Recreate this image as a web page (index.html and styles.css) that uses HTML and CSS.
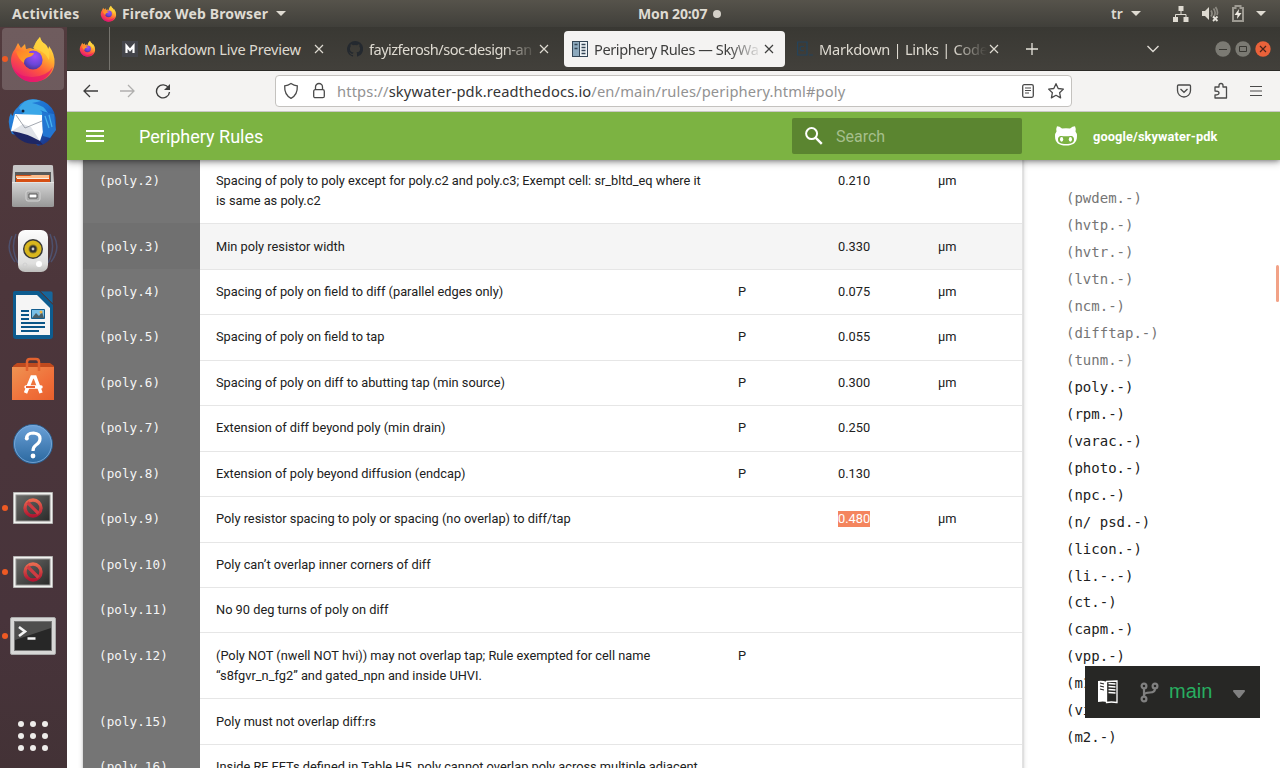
FILE: index.html
```html
<!DOCTYPE html>
<html lang="en">
<head>
<meta charset="utf-8">
<title>Periphery Rules — SkyWater</title>
<link rel="stylesheet" href="styles.css">
</head>
<body>
<svg class="defs" width="0" height="0">
  <defs>
    <linearGradient id="fx-body" x1=".85" y1="0" x2=".25" y2="1"><stop offset="0" stop-color="#fff34f"/><stop offset=".35" stop-color="#ffb02e"/><stop offset=".62" stop-color="#ff5a3c"/><stop offset="1" stop-color="#e6137a"/></linearGradient>
    <radialGradient id="fx-globe" cx=".6" cy=".3" r=".75"><stop offset="0" stop-color="#a04df8"/><stop offset=".6" stop-color="#6a46d8"/><stop offset="1" stop-color="#49328f"/></radialGradient>
    <linearGradient id="fx-face" x1="0" y1="0" x2="1" y2="1"><stop offset="0" stop-color="#ff7a2c"/><stop offset="1" stop-color="#ffae22"/></linearGradient>
    <linearGradient id="tb-blue" x1="0" y1="0" x2="1" y2="1"><stop offset="0" stop-color="#2f8fe0"/><stop offset=".5" stop-color="#1b6fd0"/><stop offset="1" stop-color="#1b2474"/></linearGradient>
    <linearGradient id="metal" x1="0" y1="0" x2="0" y2="1"><stop offset="0" stop-color="#d5d5d5"/><stop offset="1" stop-color="#979797"/></linearGradient>
    <linearGradient id="white-box" x1="0" y1="0" x2="0" y2="1"><stop offset="0" stop-color="#fdfdfd"/><stop offset=".8" stop-color="#dededd"/><stop offset="1" stop-color="#bdbdbb"/></linearGradient>
    <linearGradient id="bag" x1="0" y1="0" x2="1" y2="1"><stop offset="0" stop-color="#ee9352"/><stop offset=".6" stop-color="#f0703a"/><stop offset="1" stop-color="#e85f2c"/></linearGradient>
    <linearGradient id="help" x1="0" y1="0" x2="0" y2="1"><stop offset="0" stop-color="#6ba1d8"/><stop offset="1" stop-color="#2b689f"/></linearGradient>
    <linearGradient id="screen" x1="0" y1="0" x2="1" y2="1"><stop offset="0" stop-color="#6a6a68"/><stop offset="1" stop-color="#2b2b2a"/></linearGradient>
    <linearGradient id="stop" x1="0" y1="0" x2="0" y2="1"><stop offset="0" stop-color="#e9694f"/><stop offset="1" stop-color="#b31531"/></linearGradient>
    <symbol id="firefox" viewBox="0 0 48 48">
      <path fill="url(#fx-body)" d="M6 14 9 8l3 5 4-4 1 5q4-1 8 0Q26 7 31 2q1 5 5 7 3 2 3 5 1-1 1-3 6 8 5.500 17C45 40 35 47 24 47S3 38 2 26Q2 19 6 14Z"/>
      <path fill="#e4126e" opacity=".65" d="M3 31q6 12 21 11 14-1 20-10-6 15-20 15T3 31Z"/>
      <circle cx="24" cy="25" r="9.600" fill="url(#fx-globe)"/>
      <path fill="url(#fx-face)" d="M7 16q5-1 9 0 2-3 7-3-3 2-3 5h5q-1 3-5 4-5 1-5 6Q9 24 7 16Z"/>
      <path fill="#ffd53f" d="M24 13Q26 7 31 2q1 5 5 7 6 6 4 16-4-8-11-10Z" opacity=".8"/>
    </symbol>
    <symbol id="blocked" viewBox="0 0 42 34">
      <path fill="#f2f2f0" stroke="#b5b5b3" d="M1.500 1.500h39v31h-39z"/><path fill="#8e8e8c" d="M3.500 3.500h35v27h-35z"/><path fill="url(#screen)" d="M4.500 4.500h33v25h-33z"/>
      <circle cx="21" cy="17" r="8" fill="none" stroke="url(#stop)" stroke-width="3.400"/><path stroke="#cf3b42" stroke-width="3.200" d="m15.500 11.500 11 11"/>
    </symbol>
    <symbol id="close" viewBox="0 0 10 10"><path fill="none" stroke="currentColor" stroke-width="1.200" d="m1 1 8 8m0-8L1 9"/></symbol>
    <symbol id="caret" viewBox="0 0 10 5"><path fill="currentColor" d="M0 0h10L5 5z"/></symbol>
  </defs>
</svg>

<header class="panel">
  <span class="panel-activities">Activities</span>
  <svg class="panel-fox" width="17" height="17"><use href="#firefox"/></svg>
  <span class="panel-app">Firefox Web Browser</span>
  <svg class="panel-caret" width="10" height="5"><use href="#caret"/></svg>
  <span class="clock">Mon 20:07</span><i class="clock-dot"></i>
  <div class="tray">
    <span class="lang">tr</span>
    <svg width="10" height="5"><use href="#caret"/></svg>
    <svg class="tray-net" width="16" height="16" viewBox="0 0 16 16"><path fill="#dfdbd2" d="M5.500 0h5v5h-5zM0 11h5v5H0zM10.500 11h5v5h-5z"/><path fill="none" stroke="#dfdbd2" d="M8 5v3.500M2.500 11V8.500h10.500V11"/></svg>
    <svg class="tray-vol" width="18" height="16" viewBox="0 0 18 16"><path fill="#dfdbd2" d="M1 5h3l4-4v13l-4-4H1z"/><path fill="none" stroke="#8d8a82" stroke-width="1.700" d="M10 4.500q2 3 0 6M12.500 2.500q3 4 .5 8M14.500 1q3 4 1.500 8"/><path stroke="#e5e2da" stroke-width="1.800" d="m12 10.500 4.500 4.500m0-4.500L12 15"/></svg>
    <svg class="tray-bat" width="12" height="17" viewBox="0 0 12 17"><path fill="none" stroke="#9d9a92" stroke-width="2" d="M1 3h2.500V1h5v2H11v13H1z"/><path fill="#eeeae2" d="M7 4 2.500 10h3L5 14l4.500-6h-3z"/></svg>
    <svg class="tray-menu" width="10" height="5"><use href="#caret"/></svg>
  </div>
</header>

<div class="desktop">
<nav class="dock">
  <div class="dock-cell running active"><svg width="48" height="48"><use href="#firefox"/></svg></div>
  <div class="dock-cell"><svg width="50" height="50" viewBox="0 0 50 50">
    <path fill="url(#tb-blue)" d="M10 9Q17-1 31 2q10 2 15 12 5 14-2 23-2 6-8 9l-6 2-8-8L4 36Q-2 24 3 15q1 4 2 2 1-5 5-8Z"/>
    <path fill="#3ba7e8" d="M11 10Q18-2 33 3L24 5q12 2 16 10l-8-3q5 4 5 8L15 16Z"/>
    <path fill="#fff" d="m7 16 27 1 1 17-3 9L3 33Z"/><path fill="#e0e3e8" d="m4 33 11-7 8 3 9 14Z"/><path fill="none" stroke="#8d939d" stroke-width=".8" d="m8 17 9 13 17-7"/>
    <path fill="#1e2765" d="M4 33q14 2 28 10l3 4-6-1Q13 47 4 33Z"/><path fill="#2376d2" d="m34 14 12 2 2 16-6 8-7-2Z"/><path fill="none" stroke="#49b3ee" stroke-width="1.200" d="m37 18 4 12m0-13 3 12"/><circle cx="15" cy="13" r="1.500" fill="#13243d"/></svg></div>
  <div class="dock-cell"><svg width="44" height="46" viewBox="0 0 44 46">
    <path fill="#c7c7c7" d="M2 2q0-1 2-1h36q2 0 2 1l1 17H1Z"/><path fill="#595959" d="M4 8h36v11H4z"/><path fill="#d64f13" d="M5 11h34v8H5z"/><path fill="#ffbd8b" d="M5 12h14l2-1h17v3H5z"/><path fill="#f5f0ea" d="M6 14h32v1H6z"/>
    <path fill="url(#metal)" d="M1 18h42v24q0 1-2 1H3q-2 0-2-1Z"/><path stroke="#e4e4e4" d="M1 18.500h42"/><rect x="15" y="27" width="14" height="10" rx="2" fill="#a9a9a9" stroke="#d4d4d4"/><path fill="#fff" stroke="#555" d="M18 30h8v4h-8z"/></svg></div>
  <div class="dock-cell"><svg width="50" height="46" viewBox="0 0 50 46">
    <g fill="none" stroke="#4f5f88" stroke-width="1.500" opacity=".65"><path d="M8 6q-6 14 2 29M4 8q-7 13 3 26M42 6q6 14-2 29M46 8q7 13-3 26"/></g>
    <rect x="10" y="2" width="30" height="42" rx="7" fill="url(#white-box)"/><circle cx="25" cy="21" r="10" fill="#373737"/><circle cx="25" cy="21" r="8.600" fill="#d8b61e"/><circle cx="25" cy="21" r="4.500" fill="#8d7a24"/><circle cx="25" cy="21" r="3.500" fill="#333"/><circle cx="25" cy="21" r="1.400" fill="#ccc"/><circle cx="17" cy="37" r="2" fill="none" stroke="#d0d0d0"/><circle cx="31" cy="36" r="3" fill="#fff"/></svg></div>
  <div class="dock-cell"><svg width="42" height="48" viewBox="0 0 42 48">
    <path fill="#0d5c8f" d="M3 0h24l14 14v31q0 3-3 3H4q-3 0-3-3V2q0-2 2-2Z"/><path fill="#17669b" stroke="#4b3539" stroke-width=".8" d="M28 0h11q2 0 2 2v11Z"/><path fill="#f5f5f5" d="M4 4h21l13 13v27H4Z"/>
    <path stroke="#0b5687" stroke-width="2" d="M9 20h8M9 24h8M9 28h8M9 32h24M9 36h24M9 40h18"/><path fill="#79c0e8" stroke="#135d8e" d="M19.500 18.500h13v9h-13z"/><path fill="#4a5f67" d="m20 27 4-5 3 3 3-4 2 6Z"/><circle cx="29" cy="21" r="1.500" fill="#f2b544"/></svg></div>
  <div class="dock-cell"><svg width="44" height="46" viewBox="0 0 44 46">
    <path fill="#bf4a1e" d="m2 9 4-3h33l4 3v5H1Z"/><path fill="url(#bag)" d="M1 10h42v33H1z"/><path fill="none" stroke="#e2622f" stroke-width="2.500" d="M16 14V5q0-3 3-3h6q3 0 3 3v9"/><path fill="none" stroke="#fff" stroke-width="3.500" d="m14.500 36 6.500-16h3l6 16"/><path stroke="#fff" stroke-width="3.500" stroke-linecap="round" d="M15 30h15"/><path stroke="#e95420" stroke-width="1.800" d="M15 30h9"/></svg></div>
  <div class="dock-cell"><svg width="44" height="44" viewBox="0 0 44 44"><circle cx="22" cy="22" r="19.500" fill="url(#help)" stroke="#2c5e8e"/><circle cx="22" cy="22" r="18.500" fill="none" stroke="#7facdc" stroke-width=".8"/><path fill="none" stroke="#fff" stroke-width="3.200" d="M15.500 17q0-6 7-6 6.500.5 6.500 5.500 0 4-4 6.500-3 2-3 6"/><circle cx="15.800" cy="16.500" r="2" fill="#fff"/><circle cx="22" cy="34" r="2.400" fill="#fff"/></svg></div>
  <div class="dock-cell running"><svg width="42" height="34"><use href="#blocked"/></svg></div>
  <div class="dock-cell running"><svg width="42" height="34"><use href="#blocked"/></svg></div>
  <div class="dock-cell running"><svg width="46" height="38" viewBox="0 0 46 38"><rect x=".5" y=".5" width="45" height="37" rx="1.500" fill="#d7d7d6" stroke="#aaa"/><path fill="#777" d="M4 4h38v30H4z"/><path fill="#272727" d="M5 5h36v28H5z"/><path fill="#4e4e4d" d="M5 5h36v6L5 23z"/><path fill="none" stroke="#f4f4f4" stroke-width="2.600" d="m9 10 6 4.500-6 4.500M17.500 21.500h8"/></svg></div>
  <div class="dock-cell dock-apps"><svg width="32" height="32" viewBox="0 0 32 32" fill="#eeecea"><circle cx="4" cy="4" r="3"/><circle cx="16" cy="4" r="3"/><circle cx="28" cy="4" r="3"/><circle cx="4" cy="16" r="3"/><circle cx="16" cy="16" r="3"/><circle cx="28" cy="16" r="3"/><circle cx="4" cy="28" r="3"/><circle cx="16" cy="28" r="3"/><circle cx="28" cy="28" r="3"/></svg></div>
</nav>

<main class="browser">
  <div class="tabs">
    <div class="pinned"><svg width="17" height="17"><use href="#firefox"/></svg></div>
    <div class="tab tab-first">
      <svg class="tab-icon" width="16" height="16" viewBox="0 0 16 16"><path fill="#44454b" d="M0 0h16v16H0z"/><path fill="none" stroke="#fff" stroke-width="2.200" d="M4.500 12V5L8 9l3.500-4v7"/></svg>
      <span class="tab-name name-markdown">Markdown Live Preview</span><svg class="tab-close" width="10" height="10"><use href="#close"/></svg>
    </div>
    <div class="tab">
      <svg class="tab-icon" width="16" height="16" viewBox="0 0 16 16"><path fill="#24292f" d="M8 0a8 8 0 0 0-2.530 15.590c.4.070.550-.170.550-.380v-1.330c-2.230.490-2.700-1.070-2.700-1.070-.360-.920-.890-1.170-.890-1.170-.730-.500.060-.490.060-.490.800.060 1.230.830 1.230.830.710 1.230 1.870.870 2.330.670.070-.520.280-.870.510-1.070-1.780-.2-3.640-.890-3.640-3.960 0-.870.310-1.590.820-2.150-.080-.2-.360-1.020.080-2.120 0 0 .670-.210 2.200.820a7.600 7.600 0 0 1 4 0c1.530-1.040 2.200-.820 2.200-.820.440 1.100.160 1.920.080 2.120.510.560.820 1.280.820 2.150 0 3.080-1.870 3.750-3.650 3.950.290.250.540.730.540 1.480v2.190c0 .210.150.460.550.380A8 8 0 0 0 8 0Z"/></svg>
      <span class="tab-name name-github">fayizferosh/soc-design-an</span><svg class="tab-close" width="10" height="10"><use href="#close"/></svg>
    </div>
    <div class="tab selected">
      <svg class="tab-icon" width="16" height="16" viewBox="0 0 16 16"><path fill="#344656" d="M0 0h16v16H0z"/><path fill="#8ca9bd" d="M1 1h6v14H1z"/><path fill="#eef3f6" d="M8 1h7v14H8z"/><path stroke="#344656" stroke-width="1.300" d="M2.500 3.500h3m-3 4h3m4-4h4m-4 3h4m-4 3h4m-4 3h4"/></svg>
      <span class="tab-name name-periphery">Periphery Rules — SkyWa</span><svg class="tab-close" width="10" height="10"><use href="#close"/></svg>
    </div>
    <div class="tab">
      <svg class="tab-icon" width="16" height="16" viewBox="0 0 16 16"><path fill="none" stroke="#24435b" stroke-width="1.200" d="M.6 1h9.400v13H.6zM7 5.500q-4-1-4 2t4 2M12 14h4"/></svg>
      <span class="tab-name name-links">Markdown | Links | Codec</span><svg class="tab-close" width="10" height="10"><use href="#close"/></svg>
    </div>
    <svg class="new-tab" width="12" height="12" viewBox="0 0 12 12"><path stroke="#e6e3dc" stroke-width="1.300" d="M6 0v12M0 6h12"/></svg>
    <div class="window-tools">
      <svg width="14" height="8" viewBox="0 0 14 8"><path fill="none" stroke="#dedbd4" stroke-width="1.400" d="m1.500 1 5.500 5.500L12.500 1"/></svg>
      <div class="window-buttons">
        <svg width="16" height="16" viewBox="0 0 16 16"><circle cx="8" cy="8" r="7.700" fill="#7b7a73"/><path stroke="#383732" d="M4 8.500h8"/></svg>
        <svg width="16" height="16" viewBox="0 0 16 16"><circle cx="8" cy="8" r="7.700" fill="#7b7a73"/><path fill="none" stroke="#383732" d="M4.500 5.500h7v5h-7z"/></svg>
        <svg width="16" height="16" viewBox="0 0 16 16"><circle cx="8" cy="8" r="7.700" fill="#ea623a"/><path stroke="#4b241a" stroke-width="1.200" d="m5 5 6 6m0-6-6 6"/></svg>
      </div>
    </div>
  </div>

  <div class="toolbar">
    <svg class="nav-back" width="16" height="14" viewBox="0 0 16 14"><path fill="none" stroke="#3d3d3d" stroke-width="1.300" d="M15 7H1.500M7 1 1 7l6 6"/></svg>
    <svg class="nav-fwd" width="16" height="14" viewBox="0 0 16 14"><path fill="none" stroke="#b0afae" stroke-width="1.300" d="M1 7h13.500M9 1l6 6-6 6"/></svg>
    <svg class="nav-reload" width="16" height="16" viewBox="0 0 16 16"><path fill="none" stroke="#3d3d3d" stroke-width="1.400" d="M13.600 5A6.500 6.500 0 1 0 14.500 9"/><path fill="#3d3d3d" d="M15 1v6H9z"/></svg>
    <div class="urlbar">
      <svg width="16" height="18" viewBox="0 0 16 18"><path fill="none" stroke="#4a4a4a" stroke-width="1.300" d="M8 1.500q3 2 6.300 2.300Q14.800 13 8 16.300 1.200 13 1.700 3.800 5 3.500 8 1.500Z"/></svg>
      <svg class="lock" width="14" height="18" viewBox="0 0 14 18"><rect x="1.700" y="7.700" width="10.600" height="8" rx="1.500" fill="none" stroke="#4a4a4a" stroke-width="1.300"/><path fill="none" stroke="#4a4a4a" stroke-width="1.300" d="M3.500 7.500V5a3.500 3.500 0 0 1 7 0v2.500"/></svg>
      <span class="url">https://<b>skywater-pdk.readthedocs.io</b>/en/main/rules/periphery.html#poly</span>
      <svg class="reader" width="14" height="16" viewBox="0 0 14 16"><rect x="1.700" y="1.700" width="10.600" height="12.600" rx="1.500" fill="none" stroke="#4a4a4a" stroke-width="1.300"/><path stroke="#4a4a4a" stroke-width="1.100" d="M4 5h6M4 7.500h6M4 10h4"/></svg>
      <svg class="star" width="18" height="18" viewBox="0 0 18 18"><path fill="none" stroke="#4a4a4a" stroke-width="1.300" stroke-linejoin="round" d="m9 1.700 2.200 4.800 5.200.6-3.800 3.600 1 5.200L9 13.300l-4.600 2.600 1-5.200L1.600 7.100l5.200-.6Z"/></svg>
    </div>
    <div class="toolbar-icons">
      <svg width="16" height="16" viewBox="0 0 16 16"><path fill="none" stroke="#4a4a4a" stroke-width="1.300" d="M2.500 2h11q1 0 1 1v4.500a6.500 6.500 0 0 1-13 0V3q0-1 1-1Z"/><path fill="none" stroke="#4a4a4a" stroke-width="1.300" d="M4.500 6 8 9.300 11.500 6"/></svg>
      <svg width="16" height="18" viewBox="0 0 16 18"><path fill="none" stroke="#4a4a4a" stroke-width="1.300" stroke-linejoin="round" d="M2 16V13q4 0 4-2t-4-2V5h4V3.500q0-2 2-2t2 2V5h3.500v11Z"/></svg>
      <svg width="14" height="14" viewBox="0 0 14 14"><path stroke="#4a4a4a" stroke-width="1.200" d="M1 2.500h12M1 7h12M1 11.500h12"/></svg>
    </div>
  </div>

  <div class="doc-header">
    <svg class="menu" width="18" height="12" viewBox="0 0 18 12"><path fill="#fff" d="M0 0h18v2H0zm0 5h18v2H0zm0 5h18v2H0z"/></svg>
    <span class="doc-title">Periphery Rules</span>
    <div class="search"><svg width="18" height="18" viewBox="0 0 18 18"><circle cx="6.600" cy="6.600" r="5.500" fill="none" stroke="#fff" stroke-width="2"/><path stroke="#fff" stroke-width="2.400" d="m10.800 10.800 6 6"/></svg><span>Search</span></div>
    <svg class="cat" width="22" height="20" viewBox="0 0 22 20"><path fill="#fff" fill-rule="evenodd" d="M2 .2Q4.500.2 7 2.500q4-.7 8 0Q17.500.2 20 .2q1.300 2.800.5 5.300Q22 7.300 22 10c0 7-4 9.500-11 9.500S0 17 0 10Q0 7.300 1.500 5.500.7 3 2 .2ZM6.500 10C3.500 10 3 12 3 13.500 3 17 6 18 11 18s8-1 8-4.500c0-1.500-.5-3.500-3.500-3.500Q11 10.500 6.500 10Z"/><ellipse cx="6.600" cy="13.300" rx="1.600" ry="2.400" fill="#fff"/><ellipse cx="15.400" cy="13.300" rx="1.600" ry="2.400" fill="#fff"/></svg>
    <span class="repo">google/skywater-pdk</span>
  </div>

  <div class="page">
    <div class="rules">
      <div class="rule"><code>(poly.2)</code><p>Spacing of poly to poly except for poly.c2 and poly.c3; Exempt cell: sr_bltd_eq where it<br>is same as poly.c2</p><p></p><p>0.210</p><p>µm</p></div>
      <div class="rule hovered"><code>(poly.3)</code><p>Min poly resistor width</p><p></p><p>0.330</p><p>µm</p></div>
      <div class="rule"><code>(poly.4)</code><p>Spacing of poly on field to diff (parallel edges only)</p><p>P</p><p>0.075</p><p>µm</p></div>
      <div class="rule"><code>(poly.5)</code><p>Spacing of poly on field to tap</p><p>P</p><p>0.055</p><p>µm</p></div>
      <div class="rule"><code>(poly.6)</code><p>Spacing of poly on diff to abutting tap (min source)</p><p>P</p><p>0.300</p><p>µm</p></div>
      <div class="rule"><code>(poly.7)</code><p>Extension of diff beyond poly (min drain)</p><p>P</p><p>0.250</p><p></p></div>
      <div class="rule"><code>(poly.8)</code><p>Extension of poly beyond diffusion (endcap)</p><p>P</p><p>0.130</p><p></p></div>
      <div class="rule"><code>(poly.9)</code><p>Poly resistor spacing to poly or spacing (no overlap) to diff/tap</p><p></p><p><mark>0.480</mark></p><p>µm</p></div>
      <div class="rule"><code>(poly.10)</code><p>Poly can’t overlap inner corners of diff</p><p></p><p></p><p></p></div>
      <div class="rule"><code>(poly.11)</code><p>No 90 deg turns of poly on diff</p><p></p><p></p><p></p></div>
      <div class="rule"><code>(poly.12)</code><p>(Poly NOT (nwell NOT hvi)) may not overlap tap; Rule exempted for cell name<br>“s8fgvr_n_fg2” and gated_npn and inside UHVI.</p><p>P</p><p></p><p></p></div>
      <div class="rule"><code>(poly.15)</code><p>Poly must not overlap diff:rs</p><p></p><p></p><p></p></div>
      <div class="rule"><code>(poly.16)</code><p>Inside RF FETs defined in Table H5, poly cannot overlap poly across multiple adjacent</p><p></p><p></p><p></p></div>
    </div>
    <aside class="toc">
      <a class="seen">(pwdem.-)</a><a class="seen">(hvtp.-)</a><a class="seen">(hvtr.-)</a><a class="seen">(lvtn.-)</a><a class="seen">(ncm.-)</a><a class="seen">(difftap.-)</a><a class="seen">(tunm.-)</a>
      <a>(poly.-)</a><a>(rpm.-)</a><a>(varac.-)</a><a>(photo.-)</a><a>(npc.-)</a><a>(n/ psd.-)</a><a>(licon.-)</a><a>(li.-.-)</a><a>(ct.-)</a><a>(capm.-)</a><a>(vpp.-)</a><a>(m1.-)</a><a>(via.-)</a><a>(m2.-)</a>
    </aside>
    <i class="scroll-thumb"></i>
    <div class="version">
      <svg width="20" height="24" viewBox="0 0 20 24"><path fill="#fff" d="M0 1q4-1 9 1v20q-4-1-9 0Z"/><path fill="none" stroke="#fff" stroke-width="1.300" d="M8.500 1.500q5-.5 10.500-.5v21.500q-6-1-10.500 0Z"/><path stroke="#272525" stroke-width="1.100" d="m2 3 4 1M2 6l4 1M2 9l4 1"/><path stroke="#fff" stroke-width="1.700" d="m10.500 3.500 7 .5m-7 2.500 7 .5m-7 2.500 7 .5m-7 2.500 7 .5"/></svg>
      <svg class="branch" width="19" height="21" viewBox="0 0 19 21"><g fill="none" stroke="#808080" stroke-width="2.200"><circle cx="4" cy="4" r="2.400"/><circle cx="15" cy="4" r="2.400"/><circle cx="4" cy="17" r="2.400"/><path d="M4 6.500v8M15 6.500q0 4-5 4-6 0-6 3"/></g></svg>
      <span>main</span>
      <svg class="version-caret" width="12" height="8" viewBox="0 0 12 8"><path fill="#808080" d="M1 0h10q2 .5.500 2L7 7.500q-1 1-2 0L.5 2Q-1 .5 1 0Z"/></svg>
    </div>
  </div>
</main>
</div>
</body>
</html>
```
FILE: styles.css
```css
* { box-sizing: border-box; }
body { margin: 0; width: 1280px; height: 768px; overflow: hidden; background: #fff; font-family: "Noto Sans", "Open Sans", sans-serif; }
svg { display: block; flex: none; }
.defs { position: absolute; }

.panel { height: 27px; display: flex; align-items: center; padding-left: 12px; color: #dfdbd2; font-size: 14px; font-weight: 700; white-space: nowrap; background: linear-gradient(#56534b, #403f3a); }
.panel-activities { width: 88px; letter-spacing: .25px; }
.panel-app { margin-left: 5px; width: 149px; letter-spacing: .15px; }
.panel-caret { margin-left: 5px; }
.clock { margin-left: 352px; width: 71px; letter-spacing: -.15px; }
.clock-dot { width: 8px; height: 8px; margin-left: 4px; border-radius: 50%; background: #d5d1c9; }
.tray { flex: 1; display: flex; align-items: center; margin-left: 390px; }
.lang { width: 14px; margin-right: 6px; font-weight: 600; }
.tray-net { margin-left: 32px; }
.tray-vol { margin-left: 12px; }
.tray-bat { margin-left: 13px; }
.tray-menu { margin-left: 12px; }

.desktop { display: flex; height: 741px; }
.dock { flex: none; width: 67px; display: flex; flex-direction: column; background: linear-gradient(#523b3e, #4c363b 35%, #48343b 80%, #433236); }
.dock-cell { position: relative; width: 66px; height: 64.100px; flex: none; display: flex; align-items: center; justify-content: center; }
.active::after { content: ""; position: absolute; inset: 1px 2px; border-radius: 4px; background: #ffffff2b; }
.dock-cell svg { position: relative; z-index: 1; }
.running::before { content: ""; position: absolute; left: 2px; top: 29px; width: 6px; height: 6px; border-radius: 50%; background: #ee5a24; z-index: 1; }
.dock-apps { margin-top: auto; }

.browser { flex: 1; min-width: 0; display: flex; flex-direction: column; }
.tabs { height: 44px; flex: none; display: flex; align-items: center; background: linear-gradient(#393833, #42403b); border-bottom: 1px solid #2b2a27; color: #dedad1; }
.pinned { width: 43px; height: 43px; padding-left: 12px; display: flex; align-items: center; border-right: 1px solid #75736d; }
.tab { flex: none; width: 221px; height: 36px; margin-right: 4px; padding-left: 8px; display: flex; align-items: center; border-radius: 4px; }
.tab-first { margin-left: 4px; }
.selected { background: #f4f3f2; color: #3e3e3d; }
.tab-name { width: 168px; margin-left: 6px; white-space: nowrap; font-size: 14.600px; line-height: 22px; letter-spacing: -.2px; }
.name-github { letter-spacing: -.53px; }
.name-periphery { letter-spacing: -.43px; }
.name-links { letter-spacing: -.27px; }
.name-github, .name-periphery, .name-links { -webkit-mask-image: linear-gradient(90deg, #000 80%, transparent 100%); mask-image: linear-gradient(90deg, #000 80%, transparent 100%); }
.tab-close { margin-left: 2px; }
.new-tab { margin-left: 12px; }
.window-tools { flex: 1; display: flex; align-items: center; justify-content: space-between; padding: 0 9px 0 108px; }
.window-buttons { display: flex; gap: 4px; }

.toolbar { height: 41px; flex: none; display: flex; align-items: center; padding-left: 16px; background: #f4f3f2; border-bottom: 1px solid #cac8c5; }
.nav-fwd { margin-left: 20px; }
.nav-reload { margin-left: 20px; }
.urlbar { width: 797px; height: 32px; margin-left: 104px; padding: 0 6px 0 7px; display: flex; align-items: center; background: #fff; border: 1px solid #c4c2bf; border-radius: 4px; }
.lock { margin-left: 13px; }
.url { margin-left: 11px; width: 660px; color: #929292; font-size: 14.700px; letter-spacing: .135px; white-space: nowrap; }
.url b { color: #353535; font-weight: 400; }
.reader { margin-left: auto; }
.star { margin-left: 12px; }
.toolbar-icons { flex: 1; display: flex; align-items: center; justify-content: space-between; padding: 0 17px 0 104px; }

.doc-header { position: relative; z-index: 2; height: 48px; flex: none; display: flex; align-items: center; padding-left: 19px; color: #fff; background: #7cb342; box-shadow: 0 0 5px #0006, 0 2px 8px #0005; clip-path: inset(0 0 -20px 0); font-family: Roboto, sans-serif; }
.doc-title { margin-left: 35px; width: 653px; font-size: 18px; }
.search { width: 230px; height: 36px; padding-left: 13px; display: flex; align-items: center; border-radius: 2px; background: #5b8530; color: #a6bf8c; font-size: 16px; }
.search span { margin-left: 13px; }
.cat { margin-left: 33px; }
.repo { margin-left: 16px; font-size: 12.800px; font-weight: 700; letter-spacing: .11px; }

.page { position: relative; height: 608px; display: flex; overflow: hidden; padding-left: 16px; background: #fff; }
.rules { width: 940px; flex: none; margin-top: -2.700px; height: 630px; border-right: 1px solid #e2e2e2; box-shadow: 0 2px 2px #0002, 0 1px 5px #0003; color: #212121; font: 12.800px/20.480px Roboto, sans-serif; }
.rule { display: grid; grid-template-columns: 117px 522px 100px 100px 100px; border-top: 1px solid #e6e6e6; }
.rule code { margin-top: -1px; padding: 13.290px 16px 11.710px; background: #757575; color: #f5f5f5; font: 12.600px/20.480px "DejaVu Sans Mono", monospace; letter-spacing: .06px; }
.rule p { margin: 0; padding: 12.290px 16px 11.710px; white-space: nowrap; }
.hovered { background: #f5f5f5; }
.hovered code { background: #707070; }
mark { display: inline-block; line-height: 16px; background: #f4855e; color: #fff; }
.toc { margin-left: 43px; padding-top: 25.200px; font: 14px/26.950px "DejaVu Sans Mono", monospace; color: #212121; }
.toc a { display: block; }
.toc .seen { color: #757575; }
.scroll-thumb { position: absolute; right: 1px; top: 105px; width: 3px; height: 37px; border-radius: 2px; background: #f2a287; }
.version { position: absolute; right: 20px; bottom: 50px; width: 175px; height: 52px; padding: 0 15px 0 13px; display: flex; align-items: center; background: #272725; color: #27ae60; font: 20px "Liberation Sans", sans-serif; }
.branch { margin-left: 22px; }
.version span { margin: -2px 0 0 10px; }
.version-caret { margin-left: auto; margin-top: 4px; }
```
